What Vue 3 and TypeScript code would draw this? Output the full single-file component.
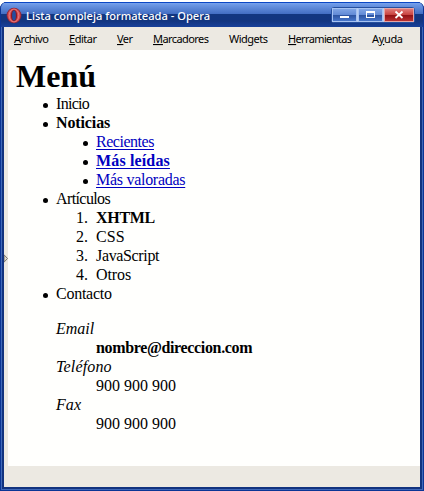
<script setup lang="ts">
interface MenuItem { before: string; key: string; after: string; width: number }
interface Row { mark?: string; text: string; track: number; bold?: boolean; link?: boolean; sub?: Row[] }

const title = 'Lista compleja formateada - Opera'
const menu: MenuItem[] = [
  { before: '', key: 'A', after: 'rchivo', width: 35 },
  { before: '', key: 'E', after: 'ditar', width: 28 },
  { before: '', key: 'V', after: 'er', width: 16 },
  { before: '', key: 'M', after: 'arcadores', width: 56 },
  { before: 'Wid', key: 'g', after: 'ets', width: 39 },
  { before: '', key: 'H', after: 'erramientas', width: 64 },
  { before: 'A', key: 'y', after: 'uda', width: 31 },
]
const rows: Row[] = [
  { text: 'Inicio', track: -0.7 },
  { text: 'Noticias', track: -0.12, bold: true, sub: [
    { text: 'Recientes', track: -0.47, link: true },
    { text: 'Más leídas', track: 0.15, link: true, bold: true },
    { text: 'Más valoradas', track: -0.28, link: true },
  ] },
  { text: 'Artículos', track: -0.6, sub: [
    { mark: '1.', text: 'XHTML', track: -0.3, bold: true },
    { mark: '2.', text: 'CSS', track: 0.1 },
    { mark: '3.', text: 'JavaScript', track: -0.35 },
    { mark: '4.', text: 'Otros', track: -0.1 },
  ] },
  { text: 'Contacto', track: -0.25 },
]
const contact = [
  { term: 'Email', track: 0, value: 'nombre@direccion.com', valueTrack: -0.35, bold: true },
  { term: 'Teléfono', track: 0.15, value: '900 900 900', valueTrack: 0, bold: false },
  { term: 'Fax', track: 0.1, value: '900 900 900', valueTrack: 0, bold: false },
]
const spacing = (n: number) => ({ letterSpacing: `${n}px` })
</script>

<template>
  <div class="window">
    <header class="titlebar">
      <svg class="logo" width="16" height="17" viewBox="0 0 16 17">
        <ellipse cx="8" cy="8.5" rx="7.4" ry="7.8" fill="#8d2638" />
        <ellipse cx="8" cy="8.5" rx="6.5" ry="6.9" fill="#d34c50" />
        <ellipse cx="8" cy="8.5" rx="4.8" ry="6.4" fill="none" stroke="#e88486" stroke-width=".8" />
        <ellipse cx="8" cy="8.5" rx="3.1" ry="5.8" fill="#8d1822" />
        <ellipse cx="8" cy="8.5" rx="1.9" ry="5" fill="#244d9f" />
      </svg>
      <svg class="title" width="186" height="18">
        <text x="0" y="13" textLength="184" lengthAdjust="spacingAndGlyphs">{{ title }}</text>
      </svg>
      <div class="controls">
        <button class="ctl" aria-label="Minimizar">
          <svg width="24" height="12"><path d="M7 7h9v2H7z" fill="#fff" /></svg>
        </button>
        <button class="ctl" aria-label="Maximizar">
          <svg width="24" height="12"><path d="M7 2h9v7H7zM8 4v4h7V4z" fill="#fff" fill-rule="evenodd" /></svg>
        </button>
        <button class="ctl close" aria-label="Cerrar">
          <svg width="28" height="12"><path d="M10.5 2.5l7 6.5M17.5 2.5l-7 6.5" stroke="#fff" stroke-width="1.8" /></svg>
        </button>
      </div>
    </header>
    <div class="client">
      <nav class="menubar">
        <svg v-for="m in menu" :key="m.key" class="item" :width="m.width" height="18">
          <text x="0" y="12" :textLength="m.width">{{ m.before }}<tspan class="key">{{ m.key }}</tspan>{{ m.after }}</text>
        </svg>
      </nav>
      <div class="middle">
        <aside class="panel">
          <svg width="4" height="9"><path d="M0 .8L3.5 4.5L0 8.2z" fill="#ddd8cc" stroke="#77736b" /></svg>
        </aside>
        <main class="page">
          <h1>Menú</h1>
          <ul>
            <li v-for="r in rows" :key="r.text">
              <div class="row"><span class="bullet"></span><span :class="{ bold: r.bold }" :style="spacing(r.track)">{{ r.text }}</span></div>
              <ul v-if="r.sub">
                <li v-for="s in r.sub" :key="s.text" class="row">
                  <span v-if="s.mark" class="number">{{ s.mark }}</span>
                  <span v-else class="bullet"></span>
                  <a v-if="s.link" :class="{ bold: s.bold }" :style="spacing(s.track)">{{ s.text }}</a>
                  <span v-else :class="{ bold: s.bold }" :style="spacing(s.track)">{{ s.text }}</span>
                </li>
              </ul>
            </li>
          </ul>
          <dl>
            <template v-for="c in contact" :key="c.term">
              <dt :style="spacing(c.track)">{{ c.term }}</dt>
              <dd :class="{ bold: c.bold }" :style="spacing(c.valueTrack)">{{ c.value }}</dd>
            </template>
          </dl>
        </main>
      </div>
      <footer class="status"></footer>
    </div>
  </div>
</template>

<style>
body { margin: 0; background: #fff; overflow: hidden; }
</style>

<style scoped>
.window {
  box-sizing: border-box; width: 424px; height: 489px; margin-top: 2px; padding: 0 4px 4px;
  display: flex; flex-direction: column; border-radius: 7px 7px 0 0; background: #153b8f;
  box-shadow: inset 0 0 0 1px #0b3595, inset 0 0 0 2px #4069b9, inset 0 0 0 4px #12337f;
}
.titlebar {
  box-sizing: border-box; height: 25px; flex: none; display: flex; padding: 5px 8px 0 5px; margin: 0 -3px;
  border-radius: 6px 6px 0 0;
  background: linear-gradient(#0b47c5 0, #0b47c5 1px, #79a3ec 1px, #6a95e3 3px, #426dc2 12px, #123680 12px, #123580 19px, #17409a 25px);
}
.logo { flex: none; }
.title { margin: 0 auto 0 4px; fill: #fff; overflow: visible; }
.title text { font: 500 11.5px "Noto Sans", "DejaVu Sans", sans-serif; }
.controls { display: flex; height: 14px; border: 1px solid #254f9f; border-radius: 3px; background: #b8cdf0; gap: 1px; }
.ctl {
  box-sizing: border-box; width: 25px; height: 14px; padding: 0; margin: 0; border: 1px solid #a6c2f2; display: flex;
  background: linear-gradient(#7fa4e5 0, #6189d5 6px, #2c529e 6px, #4776cb 12px);
}
.ctl.close { width: 30px; border-color: #e6a4a4; background: linear-gradient(#e17a78 0, #c6403c 6px, #8f1013 6px, #ba3030 12px); }
.client { flex: 1; display: flex; flex-direction: column; background: #ece9e2; }
.menubar { height: 23px; flex: none; display: flex; gap: 20px; padding: 4px 0 0 10px; box-sizing: border-box; }
.item { overflow: visible; flex: none; font: 11px "Noto Sans", "DejaVu Sans", sans-serif; fill: #000; }
.key { text-decoration: underline; text-decoration-skip-ink: none; }
.middle { display: flex; height: 416px; }
.panel { width: 4px; flex: none; display: flex; align-items: center; }
.page { flex: 1; background: #fffffd; font: 16px/20px "Liberation Serif", serif; color: #000; padding: 8px 8px 0; box-sizing: border-box; }
h1 { font-size: 32px; line-height: 36px; height: 36px; margin: 0; }
ul { list-style: none; margin: 0; padding: 0 0 0 40px; }
.row { display: flex; height: 19px; }
.bullet { width: 5px; height: 5px; border-radius: 50%; background: #000; margin: 9px 8px 0 -13px; flex: none; }
.number { width: 20px; margin-left: -20px; flex: none; }
.bold { font-weight: bold; }
a { color: #0000c0; text-decoration: underline; text-underline-offset: 2px; text-decoration-skip-ink: none; }
dl { margin: 16px 0 0 40px; }
dt, dd { height: 19px; }
dt { font-style: italic; }
dd { margin-left: 40px; }
</style>
